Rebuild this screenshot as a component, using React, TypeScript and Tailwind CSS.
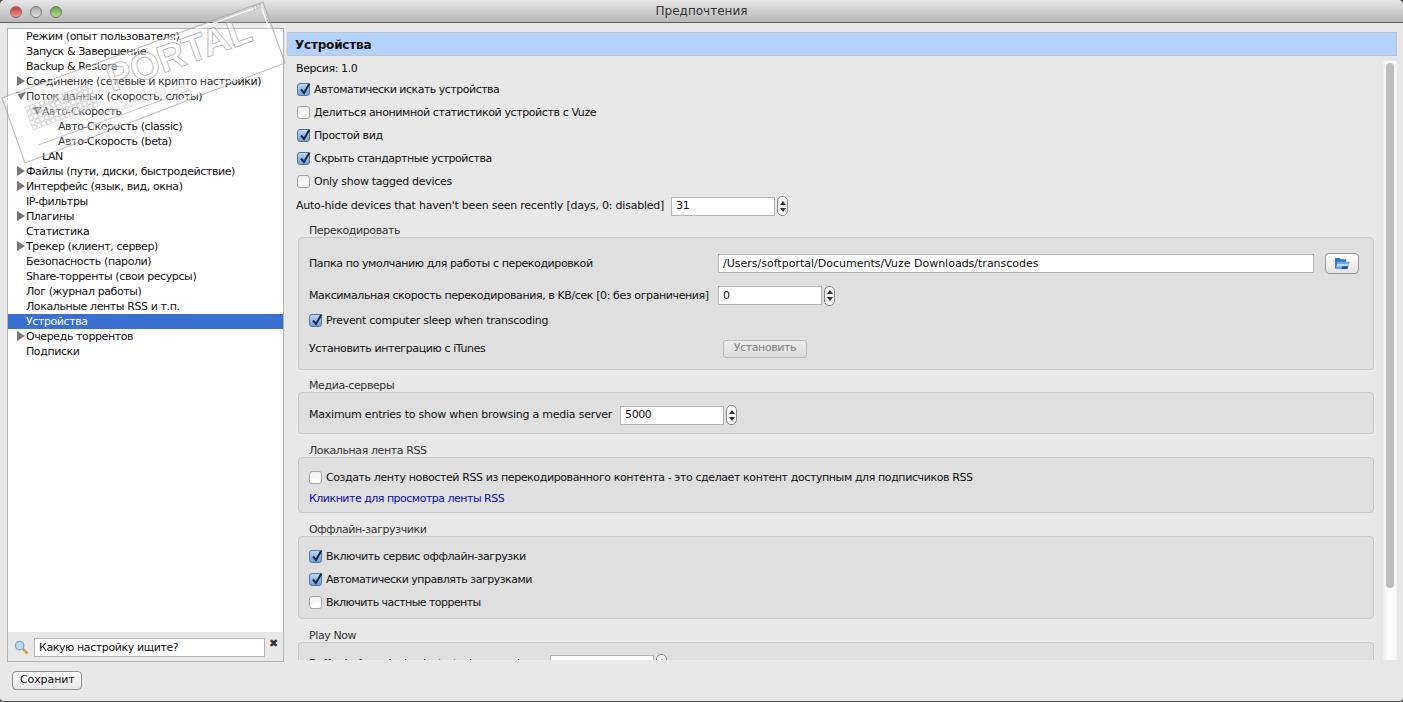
import type { ReactNode } from "react";

const tree: { label: string; indent: number; arrow?: "right" | "down"; active?: boolean }[] = [
  { label: "Режим (опыт пользователя)", indent: 0 },
  { label: "Запуск & Завершение", indent: 0 },
  { label: "Backup & Restore", indent: 0 },
  { label: "Соединение (сетевые и крипто настройки)", indent: 0, arrow: "right" },
  { label: "Поток данных (скорость, слоты)", indent: 0, arrow: "down" },
  { label: "Авто-Скорость", indent: 1, arrow: "down" },
  { label: "Авто-Скорость (classic)", indent: 2 },
  { label: "Авто-Скорость (beta)", indent: 2 },
  { label: "LAN", indent: 1 },
  { label: "Файлы (пути, диски, быстродействие)", indent: 0, arrow: "right" },
  { label: "Интерфейс (язык, вид, окна)", indent: 0, arrow: "right" },
  { label: "IP-фильтры", indent: 0 },
  { label: "Плагины", indent: 0, arrow: "right" },
  { label: "Статистика", indent: 0 },
  { label: "Трекер (клиент, сервер)", indent: 0, arrow: "right" },
  { label: "Безопасность (пароли)", indent: 0 },
  { label: "Share-торренты (свои ресурсы)", indent: 0 },
  { label: "Лог (журнал работы)", indent: 0 },
  { label: "Локальные ленты RSS и т.п.", indent: 0 },
  { label: "Устройства", indent: 0, active: true },
  { label: "Очередь торрентов", indent: 0, arrow: "right" },
  { label: "Подписки", indent: 0 },
];

function Light({ color }: { color: string }) {
  return <div className={`h-3 w-3 rounded-full border border-[#777] bg-gradient-to-b ${color}`} />;
}

function TreeRow({ label, indent, arrow, active }: (typeof tree)[number]) {
  const pad = indent === 0 ? "pl-[18px]" : indent === 1 ? "pl-[34px]" : "pl-[50px]";
  return (
    <div className={`relative h-[15px] leading-[15px] whitespace-nowrap ${pad} ${active ? "bg-[#3a70d2] text-white" : ""}`}>
      {arrow === "right" && (
        <div className="absolute left-[9px] top-[2px] h-0 w-0 border-y-[5px] border-l-[8px] border-y-transparent border-l-[#777]" />
      )}
      {arrow === "down" && (
        <div className={`absolute top-[3px] h-0 w-0 border-x-[5px] border-t-[8px] border-x-transparent border-t-[#666] ${indent === 0 ? "left-[8px]" : "left-[24px]"}`} />
      )}
      {label}
    </div>
  );
}

function Check({ on }: { on?: boolean }) {
  return (
    <div className={`relative h-[13px] w-[13px] shrink-0 rounded-[3px] border ${on ? "border-[#56759f] bg-gradient-to-b from-[#bcd6f2] to-[#6fa3dc]" : "border-[#a5a5a5] bg-gradient-to-b from-[#f0f0f0] to-white"}`}>
      {on && (
        <svg viewBox="0 0 14 14" className="absolute -top-[2px] left-0 h-[14px] w-[14px]">
          <path d="M3 7.5 L6 11 L11.5 1.5" fill="none" stroke="#1c2c44" strokeWidth="2.1" />
        </svg>
      )}
    </div>
  );
}

function CheckRow({ on, children, track = "" }: { on?: boolean; children: ReactNode; track?: string }) {
  return (
    <div className="flex h-[23px] items-center gap-[4px]">
      <Check on={on} />
      <span className={`whitespace-nowrap pt-[1px] ${track}`}>{children}</span>
    </div>
  );
}

function Stepper() {
  return (
    <div className="flex h-[20px] w-[11px] shrink-0 flex-col items-center justify-center gap-[3px] rounded-[5px] border border-[#8c8c8c] bg-[#f6f6f6]">
      <div className="h-0 w-0 border-x-[3px] border-b-[4px] border-x-transparent border-b-[#333]" />
      <div className="h-0 w-0 border-x-[3px] border-t-[4px] border-x-transparent border-t-[#333]" />
    </div>
  );
}

function Field({ value, w }: { value?: string; w: string }) {
  return (
    <div className={`flex h-[19px] shrink-0 items-center border border-[#b4b4b4] bg-white pl-[4px] pt-[1px] ${w}`}>{value}</div>
  );
}

function Group({ title, children, box }: { title: string; children: ReactNode; box: string }) {
  return (
    <div>
      <div className="flex h-[15px] items-center pl-[11px] pt-[3px] text-[#333]">{title}</div>
      <div className={`w-[1076px] rounded-[4px] border border-[#c9c9c9] bg-[#dfdfdf] ${box}`}>{children}</div>
    </div>
  );
}

function FolderIcon() {
  return (
    <svg viewBox="0 0 18 14" className="h-[13px] w-[17px]">
      <path d="M1 1 H6 L7 2.5 H13 V12.5 H1 Z" fill="#2f74d0" />
      <path d="M3.5 5 H17 L14.5 13 H1.5 Z" fill="#6aa9ea" />
      <path d="M3.5 7.5 H16 L15 10 H3 Z" fill="#bcdcf7" />
      <path d="M9 10 H15 L14.3 13 H8 Z" fill="#1b4fb0" />
    </svg>
  );
}

function Watermark() {
  return (
    <svg viewBox="0 0 300 180" className="pointer-events-none absolute left-0 top-0 h-[180px] w-[300px]">
      <path d="M2 98 L263 2 L285 63 L25 163 Z" fill="#ffffff" fillOpacity="0.14" stroke="#9c9c9c" strokeOpacity="0.6" strokeWidth="1.2" />
      <path d="M6 98 L261 6 L281 62 L28 158 Z" fill="none" stroke="#ffffff" strokeOpacity="0.8" strokeWidth="1.5" />
      <path d="M38 145 L190 90" stroke="#b0b0b0" strokeOpacity="0.7" strokeWidth="1" />
      <g transform="rotate(-20 112 92)">
        <text x="112" y="92" fontFamily="Liberation Sans, sans-serif" fontSize="38" fontWeight="700" fill="#ffffff" fillOpacity="0.4" stroke="#999999" strokeOpacity="0.7" strokeWidth="0.9">
          PORTAL
        </text>
        <text x="272" y="64" fontFamily="Liberation Sans, sans-serif" fontSize="7" fill="#aaaaaa">
          TM
        </text>
      </g>
      <g transform="rotate(-20 100 118)">
        <text x="100" y="118" fontFamily="Liberation Sans, sans-serif" fontSize="9" fontWeight="700" fill="#ffffff" fillOpacity="0.4" stroke="#a8a8a8" strokeOpacity="0.7" strokeWidth="0.3" letterSpacing="0.5">
          www.softportal.com
        </text>
      </g>
      <g transform="rotate(-20 30 115)" fill="#ffffff" fillOpacity="0.55" stroke="#a0a0a0" strokeOpacity="0.75" strokeWidth="0.5">
        {[0, 1, 2, 3, 4, 5, 6, 7, 8, 9, 10, 11, 12, 13].map((c) =>
          [0, 1, 2, 3, 4].map((r) => <rect key={`${c}-${r}`} x={28 + c * 5} y={106 + r * 5} width="4" height="4" />),
        )}
      </g>
    </svg>
  );
}

export default function App() {
  return (
    <div className="h-[702px] w-[1403px] overflow-hidden bg-[#4a4a4a] text-[11px] tracking-[-0.4px] text-[#111]" style={{ fontFamily: '"DejaVu Sans", sans-serif' }}>
      <div className="relative flex h-[702px] flex-col overflow-hidden rounded-t-[5px] rounded-b-[4px] border-b border-[#555] bg-[#e8e8e8]">
        <div className="relative flex h-[23px] shrink-0 items-center justify-center border-b border-[#5c5c5c] bg-gradient-to-b from-[#e6e6e6] to-[#b8b8b8]">
          <div className="absolute left-[10px] top-[6px] flex gap-2">
            <Light color="from-[#c93a36] to-[#f0918a]" />
            <Light color="from-[#a8a8a8] to-[#dedede]" />
            <Light color="from-[#6ea34a] to-[#b4dc8a]" />
          </div>
          <span className="text-[12px] tracking-normal text-[#333]">Предпочтения</span>
        </div>

        <div className="flex h-[638px] shrink-0 gap-[3px] pl-[7px] pt-[5px]">
          <div className="flex h-[634px] w-[277px] shrink-0 flex-col border border-[#b2b2b2]">
            <div className="h-[603px] shrink-0 bg-white">
              {tree.map((t) => (
                <TreeRow key={t.label} {...t} />
              ))}
            </div>
            <div className="flex flex-1 items-center pl-[6px] pt-[2px]">
              <svg viewBox="0 0 16 16" className="mr-[5px] h-[15px] w-[15px] shrink-0">
                <circle cx="6" cy="6" r="4.5" fill="#bcdcf5" stroke="#7fa9c9" strokeWidth="1.4" />
                <path d="M9.5 9.5 L14.5 14.5" stroke="#c99a52" strokeWidth="2.4" />
              </svg>
              <Field value="Какую настройку ищите?" w="w-[231px]" />
              <span className="ml-[4px] -mt-[9px] text-[11px] leading-none text-[#333]">✖</span>
            </div>
          </div>

          <div className="flex min-w-0 flex-1 flex-col pt-[4px]">
            <div className="flex h-[24px] w-[1110px] shrink-0 items-center border border-[#b8c6d6] bg-[#b3d3fb] pl-[7px] pt-[1px] text-[12px] font-bold tracking-[-0.2px]">
              Устройства
            </div>
            <div className="flex min-h-0 flex-1">
              <div className="h-[604px] w-[1089px] shrink-0 overflow-hidden pl-[9px] pt-[4px]">
                <div className="flex h-[18px] items-center">Версия: 1.0</div>
                <div className="pl-[1px]">
                  <CheckRow on track="tracking-[-0.5px]">Автоматически искать устройства</CheckRow>
                  <CheckRow>Делиться анонимной статистикой устройств с Vuze</CheckRow>
                  <CheckRow on>Простой вид</CheckRow>
                  <CheckRow on track="tracking-[-0.5px]">Скрыть стандартные устройства</CheckRow>
                  <CheckRow track="tracking-[-0.28px]">Only show tagged devices</CheckRow>
                </div>
                <div className="flex h-[26px] items-center">
                  <span className="whitespace-nowrap tracking-[-0.23px]">Auto-hide devices that haven't been seen recently [days, 0: disabled]</span>
                  <div className="ml-[7px]" />
                  <Field value="31" w="w-[104px]" />
                  <div className="ml-[2px]" />
                  <Stepper />
                </div>

                <div className="flex flex-col gap-[8px] pl-[2px] pt-[3px]">
                  <Group title="Перекодировать" box="-mb-[1px] h-[133px] pl-[10px] pt-[1px]">
                    <div className="flex h-[49px] items-center">
                      <span className="w-[409px] whitespace-nowrap pt-[1px]">Папка по умолчанию для работы с перекодировкой</span>
                      <div className="tracking-normal">
                        <Field value="/Users/softportal/Documents/Vuze Downloads/transcodes" w="w-[596px]" />
                      </div>
                      <button className="ml-[11px] flex h-[21px] w-[34px] items-center justify-center rounded-[4px] border border-[#9a9a9a] bg-gradient-to-b from-white to-[#e4e4e4]">
                        <FolderIcon />
                      </button>
                    </div>
                    <div className="flex h-[15px] items-center">
                      <span className="w-[409px] whitespace-nowrap pt-[1px]">Максимальная скорость перекодирования, в KB/сек [0: без ограничения]</span>
                      <Field value="0" w="w-[104px]" />
                      <div className="ml-[2px]" />
                      <Stepper />
                    </div>
                    <div className="pt-[6px]">
                      <CheckRow on track="tracking-[-0.28px]">Prevent computer sleep when transcoding</CheckRow>
                    </div>
                    <div className="flex h-[33px] items-center">
                      <span className="w-[414px] whitespace-nowrap pt-[1px]">Установить интеграцию с iTunes</span>
                      <button className="flex h-[18px] w-[84px] items-center justify-center rounded-[3px] border border-[#bcbcbc] bg-gradient-to-b from-[#ececec] to-[#dcdcdc] text-[#808080]">
                        Установить
                      </button>
                    </div>
                  </Group>
                  <Group title="Медиа-серверы" box="flex h-[42px] items-center pl-[10px] pt-[4px]">
                    <span className="whitespace-nowrap pt-[1px] tracking-[-0.23px]">Maximum entries to show when browsing a media server</span>
                    <div className="ml-[8px]" />
                    <Field value="5000" w="w-[104px]" />
                    <div className="ml-[2px]" />
                    <Stepper />
                  </Group>
                  <Group title="Локальная лента RSS" box="h-[56px] pl-[10px] pt-[8px]">
                    <CheckRow>Создать ленту новостей RSS из перекодированного контента - это сделает контент доступным для подписчиков RSS</CheckRow>
                    <div className="flex h-[20px] items-center tracking-[-0.5px] text-[#0b0bb0]">Кликните для просмотра ленты RSS</div>
                  </Group>
                  <Group title="Оффлайн-загрузчики" box="h-[83px] pl-[10px] pt-[8px]">
                    <CheckRow on>Включить сервис оффлайн-загрузки</CheckRow>
                    <CheckRow on track="tracking-[-0.5px]">Автоматически управлять загрузками</CheckRow>
                    <CheckRow track="tracking-[-0.55px]">Включить частные торренты</CheckRow>
                  </Group>
                  <Group title="Play Now" box="h-[60px] pl-[10px] pt-[11px]">
                    <div className="flex h-[20px] items-center">
                      <span className="w-[241px] whitespace-nowrap tracking-[-0.23px]">Buffer before playback starts, in seconds</span>
                      <Field value="" w="w-[104px]" />
                      <div className="ml-[2px]" />
                      <Stepper />
                    </div>
                  </Group>
                </div>
              </div>
              <div className="ml-[7px] mt-[5px] h-[599px] w-[14px] shrink-0 bg-gradient-to-r from-[#efefef] via-white to-[#f2f2f2] px-[3px] pt-[2px]">
                <div className="h-[525px] w-full rounded-[4px] bg-[#bdbdbd]" />
              </div>
            </div>
          </div>
        </div>

        <div className="pl-[12px] pt-[10px]">
          <button className="flex h-[19px] w-[70px] items-center overflow-hidden rounded-[4px] border border-[#8e8e8e] bg-gradient-to-b from-white to-[#e6e6e6] pl-[7px] text-[11px] tracking-[-0.1px]">
            <span className="w-[55px] overflow-hidden whitespace-nowrap text-left">Сохранить</span>
          </button>
        </div>
        <Watermark />
      </div>
    </div>
  );
}
